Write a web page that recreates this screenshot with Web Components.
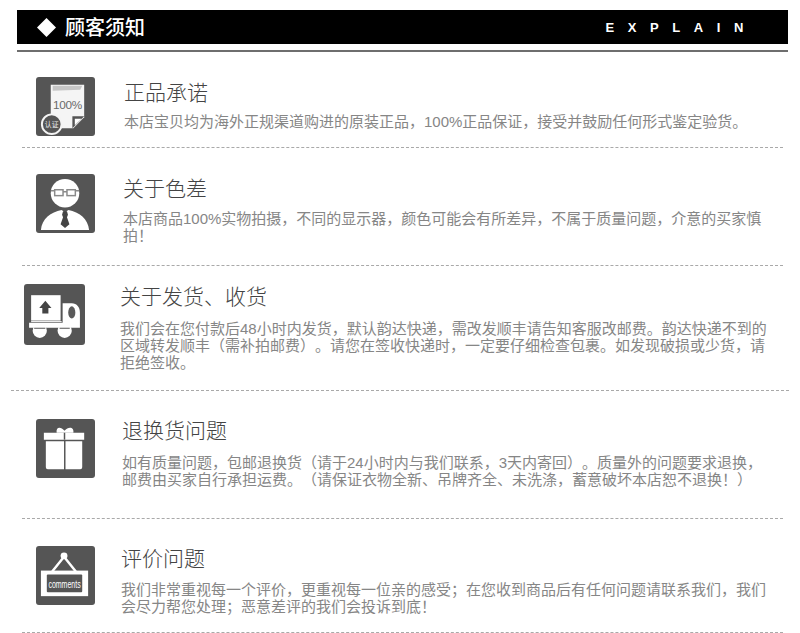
<!DOCTYPE html>
<html lang="zh"><head><meta charset="utf-8"><title>顾客须知</title>
<style>
html,body{margin:0;padding:0;background:#fff}
body{width:800px;height:633px;overflow:hidden;font-family:"Noto Sans CJK SC","Liberation Sans",sans-serif}
</style></head><body>
<notice-page>
<notice-header title-text="顾客须知" sub="EXPLAIN"></notice-header>
<notice-row h="96" pl="36" iw="59" it="25" gap="29" tt="25" dt="8" ml="22" mr="17" kind="cert" heading="正品承诺">本店宝贝均为海外正规渠道购进的原装正品，100%正品保证，接受并鼓励任何形式鉴定验货。</notice-row>
<notice-row h="118" pl="36" iw="59" it="26" gap="28" tt="25" dt="9" ml="22" mr="17" kind="person" heading="关于色差">本店商品100%实物拍摄，不同的显示器，颜色可能会有所差异，不属于质量问题，介意的买家慎<br>拍！</notice-row>
<notice-row h="125" pl="24" iw="61" it="18" gap="35" tt="15" dt="11" ml="11" mr="11" kind="truck" heading="关于发货、收货">我们会在您付款后48小时内发货，默认韵达快递，需改发顺丰请告知客服改邮费。韵达快递不到的<br>区域转发顺丰（需补拍邮费）。请您在签收快递时，一定要仔细检查包裹。如发现破损或少货，请<br>拒绝签收。</notice-row>
<notice-row h="128" pl="36" iw="59" it="28" gap="27" tt="24" dt="11" ml="22" mr="17" kind="gift" heading="退换货问题">如有质量问题，包邮退换货（请于24小时内与我们联系，3天内寄回）。质量外的问题要求退换，<br>邮费由买家自行承担运费。（请保证衣物全新、吊牌齐全、未洗涤，蓄意破坏本店恕不退换！）</notice-row>
<notice-row h="114" pl="36" iw="59" it="27" gap="26" tt="24" dt="10" ml="22" mr="17" kind="sign" heading="评价问题">我们非常重视每一个评价，更重视每一位亲的感受；在您收到商品后有任何问题请联系我们，我们<br>会尽力帮您处理；恶意差评的我们会投诉到底！</notice-row>
</notice-page>
<script>
class NoticePage extends HTMLElement{constructor(){super();this.attachShadow({mode:'open'}).innerHTML=`<style>:host{display:flex;flex-direction:column;width:800px;height:633px;padding-top:10px;box-sizing:border-box;overflow:hidden}</style><slot></slot>`}}
class NoticeHeader extends HTMLElement{connectedCallback(){
 const s=this.attachShadow({mode:'open'});
 s.innerHTML=`<style>
 :host{display:block;margin:0 12px 0 17px;padding-bottom:6px;border-bottom:2px solid #6e6e6e;font-family:"Noto Sans CJK SC","Liberation Sans",sans-serif}
 .bar{height:34px;background:#000;color:#fff;display:flex;align-items:center;padding-left:20px;padding-right:45px}
 svg{width:19px;height:19px;margin-right:9px;flex:none}
 h1{margin:0;font-size:20px;font-weight:500;line-height:34px;flex:1}
 .sub{font:bold 13px "Liberation Sans",sans-serif;letter-spacing:13.6px;margin-right:-14px}
 </style><div class="bar"><svg viewBox="0 0 19 19"><path d="M9.5 0 19 9.5 9.5 19 0 9.5Z" fill="#fff"/></svg><h1>${this.getAttribute('title-text')}</h1><span class="sub">${this.getAttribute('sub')}</span></div>`;
}}
const ICONS={
cert:`<path d="M15 8H49V41L38 52H15Z" fill="#f5f5f5"/><path d="M17 9H47L45 13 17 14Z" fill="#c6c6c6"/><text x="32" y="33" font-family="Liberation Sans" font-size="12" fill="#6a6a6a" text-anchor="middle" letter-spacing="-.3">100%</text><path d="M37 52V40H49Z" fill="#555"/><path d="M39.500 49V42.500H46.500Z" fill="#fff"/><circle cx="16" cy="48" r="10" fill="#555" stroke="#f4f4f4" stroke-width="2"/><text x="16" y="51" font-family="Noto Sans CJK SC" font-size="7" fill="#eee" text-anchor="middle">认证</text>`,
person:`<circle cx="29.500" cy="19.500" r="14.500" fill="#fff"/><path d="M5 57C6 45 15 39 26 36.500L29.500 39 33 36.500C44 39 53 45 54 57Z" fill="#fff"/><path d="M27.500 38H31.500L32.500 41.500 31.500 44 34 51 29.500 55 25 51 27.500 44 26.500 41.500Z" fill="#444"/><g fill="none" stroke="#8a8a8a" stroke-width="1.500"><rect x="19" y="16" width="8.500" height="6"/><rect x="31.500" y="16" width="8.500" height="6"/><path d="M27.500 18H31.500M15 17H19M40 17H44"/></g>`,
truck:`<rect x="7" y="11" width="29" height="25" fill="#fff"/><path d="M21 16.500 27 23.500H24V29H18V23.500H15Z" fill="#444"/><path d="M38 37V19H47C52 19 55 23 55 28V43H5V38H38Z" fill="#fff"/><path d="M7 37H37" stroke="#fff" stroke-width="1"/><ellipse cx="47" cy="28" rx="3.500" ry="6" fill="#5a5a5a"/><circle cx="15.500" cy="46" r="7" fill="#fff"/><circle cx="40" cy="46" r="7" fill="#fff"/><path d="M10 43.500H21M35 43.500H45" stroke="#555" stroke-width="1"/>`,
gift:`<path d="M8 14H49V21H8Z" fill="#fff"/><path d="M10 22.500H28.500V51H12Q10 51 10 49ZM30 22.500H47V49Q47 51 45 51H30Z" fill="#fff"/><path d="M21 14C20 8 25 7 29 12 33 7 39 8 38 14Z" fill="#fff"/><path d="M29 14V21" stroke="#555" stroke-width="1.500"/>`,
sign:`<circle cx="28.500" cy="10" r="3.500" fill="#fff"/><path d="M28.500 11 16.500 26M28.500 11 40.500 26" stroke="#fff" stroke-width="2.500" fill="none"/><rect x="5" y="25" width="48" height="26" fill="#fff"/><rect x="11" y="29" width="36" height="18" rx="1" fill="#555"/><text transform="translate(29 43) scale(.62 1)" font-family="Liberation Sans" font-size="11.500" font-weight="400" fill="#fff" text-anchor="middle">comments</text>`
};
class NoticeRow extends HTMLElement{connectedCallback(){
 const a=n=>this.getAttribute(n);
 const s=this.attachShadow({mode:'open'});
 s.innerHTML=`<style>
 :host{display:block;height:${a('h')}px;box-sizing:border-box;margin:0 ${a('mr')}px 0 ${a('ml')}px;border-bottom:1px dashed #a9a9a9;flex:none;font-family:"Noto Sans CJK SC","Liberation Sans",sans-serif}
 .row{display:flex;padding-left:${+a('pl')-+a('ml')}px;white-space:nowrap;text-spacing-trim:space-all}
 svg{width:${a('iw')}px;height:${a('iw')}px;margin-top:${a('it')}px;margin-right:${a('gap')}px;flex:none}
 h2{margin:${a('tt')}px 0 0;font-size:21px;line-height:28px;font-weight:300;color:#444}
 p{margin:${a('dt')}px 0 0;font-family:"Liberation Sans","Noto Sans CJK SC",sans-serif;font-size:15px;line-height:17px;font-weight:400;color:#868686}
 </style><div class="row"><svg viewBox="0 0 60 60"><rect width="60" height="60" rx="3" fill="#555"/>${ICONS[a('kind')]}</svg><div><h2>${a('heading')}</h2><p><slot></slot></p></div></div>`;
}}
customElements.define('notice-page',NoticePage);
customElements.define('notice-header',NoticeHeader);
customElements.define('notice-row',NoticeRow);
</script>
</body></html>
